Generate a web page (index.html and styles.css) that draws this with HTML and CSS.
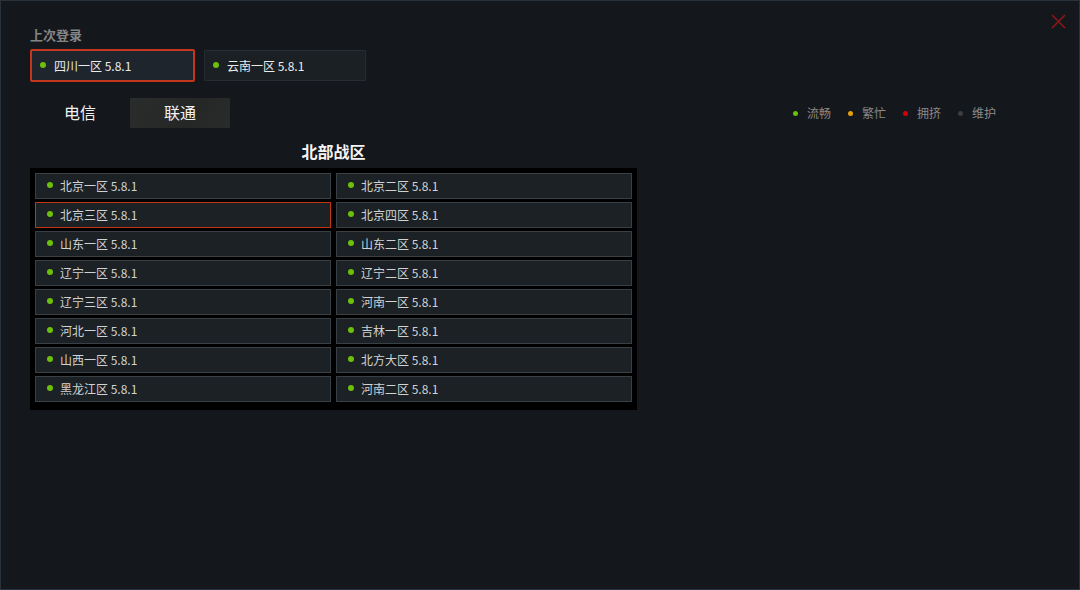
FILE: index.html
```html
<!DOCTYPE html>
<html lang="zh-CN">
<head>
    <meta charset="UTF-8">
    <meta name="viewport" content="width=device-width, initial-scale=1.0">
    <title>选择服务器</title>
    <link rel="stylesheet" href="styles.css">
</head>
<body>
<div class="dialog">
    <button class="close-btn" aria-label="关闭">
        <svg width="15" height="15" viewBox="0 0 15 15">
            <path d="M1 1 L14 14 M14 1 L1 14" stroke="#8c1616" stroke-width="1.6" fill="none"/>
        </svg>
    </button>

    <div class="recent-title">上次登录</div>
    <div class="recent-list">
        <div class="recent-item active"><span class="dot green"></span>四川一区 5.8.1</div>
        <div class="recent-item"><span class="dot green"></span>云南一区 5.8.1</div>
    </div>

    <div class="tab-row">
        <div class="tabs">
            <div class="tab">电信</div>
            <div class="tab active">联通</div>
        </div>
        <ul class="legend">
            <li><span class="dot green"></span>流畅</li>
            <li><span class="dot orange"></span>繁忙</li>
            <li><span class="dot red"></span>拥挤</li>
            <li><span class="dot gray"></span>维护</li>
        </ul>
    </div>

    <div class="zone">
        <h2 class="zone-title">北部战区</h2>
        <div class="server-grid">
            <div class="server"><span class="dot green"></span>北京一区 5.8.1</div>
            <div class="server"><span class="dot green"></span>北京二区 5.8.1</div>
            <div class="server selected"><span class="dot green"></span>北京三区 5.8.1</div>
            <div class="server"><span class="dot green"></span>北京四区 5.8.1</div>
            <div class="server"><span class="dot green"></span>山东一区 5.8.1</div>
            <div class="server"><span class="dot green"></span>山东二区 5.8.1</div>
            <div class="server"><span class="dot green"></span>辽宁一区 5.8.1</div>
            <div class="server"><span class="dot green"></span>辽宁二区 5.8.1</div>
            <div class="server"><span class="dot green"></span>辽宁三区 5.8.1</div>
            <div class="server"><span class="dot green"></span>河南一区 5.8.1</div>
            <div class="server"><span class="dot green"></span>河北一区 5.8.1</div>
            <div class="server"><span class="dot green"></span>吉林一区 5.8.1</div>
            <div class="server"><span class="dot green"></span>山西一区 5.8.1</div>
            <div class="server"><span class="dot green"></span>北方大区 5.8.1</div>
            <div class="server"><span class="dot green"></span>黑龙江区 5.8.1</div>
            <div class="server"><span class="dot green"></span>河南二区 5.8.1</div>
        </div>
    </div>
</div>
</body>
</html>
```

FILE: styles.css
```css
body {
    margin: 0;
    padding: 0;
    background: #14171c;
    font-family: "Noto Sans CJK SC", "Noto Sans", sans-serif;
    color: #d6d6d6;
}

.dialog {
    position: relative;
    width: 1080px;
    height: 590px;
    box-sizing: border-box;
    border: 1px solid #29313a;
    padding: 26px 29px 0 29px;
    background: #14171c;
}

.close-btn {
    position: absolute;
    top: 12px;
    right: 12px;
    width: 16px;
    height: 16px;
    padding: 0;
    border: none;
    background: none;
    cursor: pointer;
}

.close-btn svg {
    display: block;
}

.recent-title {
    font-size: 13px;
    line-height: 16px;
    font-weight: bold;
    color: #858585;
}

.recent-list {
    display: flex;
    align-items: center;
    gap: 9px;
    margin-top: 6px;
}

.recent-item {
    display: flex;
    align-items: center;
    width: 162px;
    height: 31px;
    box-sizing: border-box;
    padding-left: 8px;
    padding-bottom: 1px;
    border: 1px solid #262c31;
    border-radius: 1px;
    background: #1a2024;
    font-size: 12px;
    color: #ececec;
}

.recent-item.active {
    width: 165px;
    height: 33px;
    border: 2px solid #c6361f;
    border-radius: 2px;
    background: #1e252c;
}

.recent-item .dot {
    margin-right: 8px;
}

.dot {
    display: inline-block;
    width: 6px;
    height: 6px;
    border-radius: 50%;
    flex-shrink: 0;
}

.dot.green { background: #6cbf0b; }
.dot.orange { background: #e5a00e; }
.dot.red { background: #d0020a; }
.dot.gray { background: #3d3d3d; }

.tab-row {
    display: flex;
    justify-content: space-between;
    align-items: center;
    margin-top: 16px;
    padding-right: 54px;
}

.tabs {
    display: flex;
}

.tab {
    width: 100px;
    height: 30px;
    line-height: 29px;
    text-align: center;
    font-size: 16px;
    color: #f2f2f2;
}

.tab.active {
    background: linear-gradient(120deg, #2b2c2c, #252727 60%, #2a2b2b);
    border-radius: 1px;
}

.legend {
    display: flex;
    list-style-type: none;
    margin: 0;
    padding: 0;
    gap: 17px;
}

.legend li {
    display: flex;
    align-items: center;
    font-size: 12px;
    line-height: 16px;
    color: #8a8a8a;
}

.legend .dot {
    width: 5px;
    height: 5px;
    margin-right: 9px;
}

.zone {
    width: 607px;
    margin-top: 11px;
}

.zone-title {
    margin: 0 0 5px 0;
    text-align: center;
    font-size: 16px;
    line-height: 24px;
    font-weight: bold;
    color: #f4f4f4;
}

.server-grid {
    display: grid;
    grid-template-columns: 296px 296px;
    grid-auto-rows: 26px;
    column-gap: 5px;
    row-gap: 3px;
    padding: 5px 5px 8px 5px;
    background: #000;
}

.server {
    display: flex;
    align-items: center;
    box-sizing: border-box;
    padding-left: 11px;
    padding-bottom: 2px;
    border: 1px solid #384045;
    background: #1b2125;
    font-size: 12px;
    color: #d2d2d2;
    cursor: pointer;
}

.server.selected {
    border-color: #c2360f;
}

.server .dot {
    margin-right: 7px;
}
```
